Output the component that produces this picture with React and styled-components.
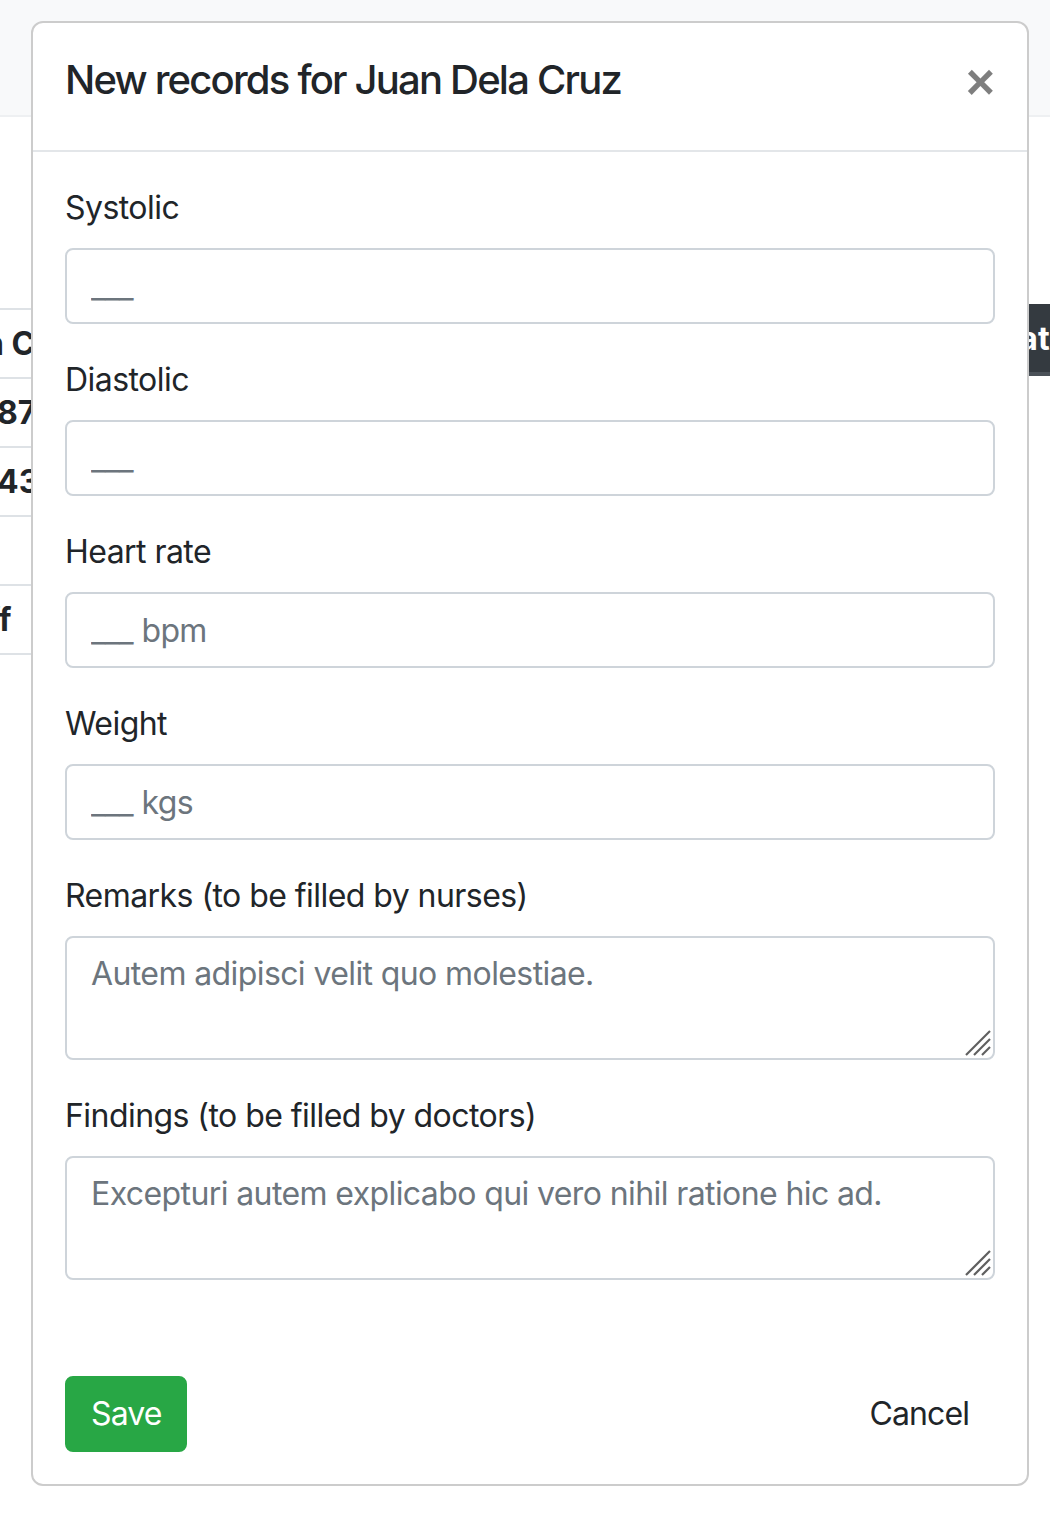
import React from "react";
import styled, { createGlobalStyle } from "styled-components";

const Global = createGlobalStyle`
  html, body { margin: 0; padding: 0; background: #fff; }
  body { font-family: Inter, "Helvetica Neue", Arial, sans-serif; color: #212529; }
  * { box-sizing: border-box; }
`;

const Page = styled.div`
  position: relative;
  width: 1050px;
  height: 1518px;
  overflow: hidden;
  background: #fff;
`;

const Navbar = styled.div`
  height: 117px;
  background: #f8f9fa;
  border-bottom: 2px solid #eef0f2;
`;

const Content = styled.div`
  display: flex;
  justify-content: space-between;
  align-items: flex-start;
  padding-top: 191px;
`;

const Table = styled.div`
  width: 200px;
  display: flex;
  flex-direction: column;
  border-top: 2px solid #dee2e6;
`;

const Row = styled.div`
  height: 69px;
  border-bottom: 2px solid #dee2e6;
  display: flex;
  align-items: center;
  font-weight: 700;
  font-size: 32px;
  white-space: nowrap;
  color: #212529;
`;

const CellText = styled.span`
  margin-left: ${(p) => p.$indent}px;
`;

const DarkButton = styled.div`
  margin-top: -4px;
  margin-right: -60px;
  width: 240px;
  height: 72px;
  background: #343a40;
  border-bottom: 4px solid #4a5158;
  color: #fff;
  font-weight: 700;
  font-size: 32px;
  display: flex;
  align-items: center;
  padding-left: 94px;
  white-space: nowrap;
`;

const Modal = styled.div`
  position: absolute;
  top: 21px;
  left: 31px;
  width: 998px;
  background: #fff;
  border: 2px solid #cccccc;
  border-radius: 12px;
  display: flex;
  flex-direction: column;
`;

const Header = styled.div`
  display: flex;
  align-items: flex-start;
  justify-content: space-between;
  padding: 27px 32px 40px 32px;
  border-bottom: 2px solid #e3e6e9;
`;

const Title = styled.h5`
  margin: 0;
  font-size: 40px;
  font-weight: 500;
  line-height: 60px;
  color: #212529;
  letter-spacing: -1.8px;
`;

const Close = styled.button`
  border: 0;
  background: transparent;
  padding: 0;
  margin: 7px 0 0 0;
  font-family: Arial, "Liberation Sans", sans-serif;
  font-size: 50px;
  font-weight: 700;
  line-height: 1;
  color: #000;
  opacity: 0.5;
  cursor: pointer;
`;

const Body = styled.div`
  padding: 32px;
  display: flex;
  flex-direction: column;
`;

const Group = styled.div`
  display: flex;
  flex-direction: column;
  margin-bottom: 32px;
`;

const Label = styled.label`
  font-size: 32px;
  line-height: 48px;
  margin-bottom: 16px;
  color: #212529;
  letter-spacing: -0.55px;
`;

const fieldCss = `
  width: 100%;
  font-family: Inter, "Helvetica Neue", Arial, sans-serif;
  font-size: 32px;
  line-height: 48px;
  letter-spacing: -0.6px;
  padding: 12px 24px;
  border: 2px solid #ced4da;
  border-radius: 8px;
  color: #495057;
  background: #fff;
  outline: none;
  &::placeholder { color: #6c757d; opacity: 1; }
`;

const Input = styled.input`
  ${fieldCss}
  height: 76px;
`;

const AreaWrap = styled.div`
  position: relative;
`;

const TextArea = styled.textarea`
  ${fieldCss}
  height: 124px;
  resize: none;
  display: block;
`;

const Grip = styled.svg`
  position: absolute;
  right: 3px;
  bottom: 3px;
  width: 28px;
  height: 28px;
  pointer-events: none;
`;

const Actions = styled.div`
  display: flex;
  justify-content: space-between;
  align-items: center;
  margin-top: 64px;
`;

const Button = styled.button`
  font-family: Inter, "Helvetica Neue", Arial, sans-serif;
  font-size: 32px;
  line-height: 48px;
  letter-spacing: -0.9px;
  padding: 12px 24px;
  border: 2px solid ${(p) => (p.$variant === "success" ? "#28a745" : "transparent")};
  border-radius: 8px;
  background: ${(p) => (p.$variant === "success" ? "#28a745" : "transparent")};
  color: ${(p) => (p.$variant === "success" ? "#fff" : "#212529")};
  cursor: pointer;
`;

const fields = [
  { label: "Systolic", placeholder: "___" },
  { label: "Diastolic", placeholder: "___" },
  { label: "Heart rate", placeholder: "___ bpm" },
  { label: "Weight", placeholder: "___ kgs" },
];

const areas = [
  { label: "Remarks (to be filled by nurses)", placeholder: "Autem adipisci velit quo molestiae." },
  { label: "Findings (to be filled by doctors)", placeholder: "Excepturi autem explicabo qui vero nihil ratione hic ad." },
];

function ResizeGrip() {
  return (
    <Grip viewBox="0 0 28 28" aria-hidden="true">
      <g stroke="#5f5f5f" strokeWidth="2.2" strokeLinecap="butt">
        <line x1="2" y1="26" x2="26" y2="2" />
        <line x1="10" y1="26" x2="26" y2="10" />
        <line x1="18" y1="26" x2="26" y2="18" />
      </g>
    </Grip>
  );
}

export default function App() {
  return (
    <Page>
      <Global />
      <Navbar />
      <Content>
        <Table>
          <Row><CellText $indent={-16}>n C</CellText></Row>
          <Row><CellText $indent={-3}>8712</CellText></Row>
          <Row><CellText $indent={-3}>4301</CellText></Row>
          <Row />
          <Row><CellText $indent={-64}>Staff</CellText></Row>
        </Table>
        <DarkButton>Create</DarkButton>
      </Content>

      <Modal role="dialog">
        <Header>
          <Title>New records for Juan Dela Cruz</Title>
          <Close aria-label="Close">×</Close>
        </Header>
        <Body>
          {fields.map((f) => (
            <Group key={f.label}>
              <Label>{f.label}</Label>
              <Input placeholder={f.placeholder} />
            </Group>
          ))}
          {areas.map((a) => (
            <Group key={a.label}>
              <Label>{a.label}</Label>
              <AreaWrap>
                <TextArea rows={2} placeholder={a.placeholder} />
                <ResizeGrip />
              </AreaWrap>
            </Group>
          ))}
          <Actions>
            <Button $variant="success">Save</Button>
            <Button $variant="link">Cancel</Button>
          </Actions>
        </Body>
      </Modal>
    </Page>
  );
}
